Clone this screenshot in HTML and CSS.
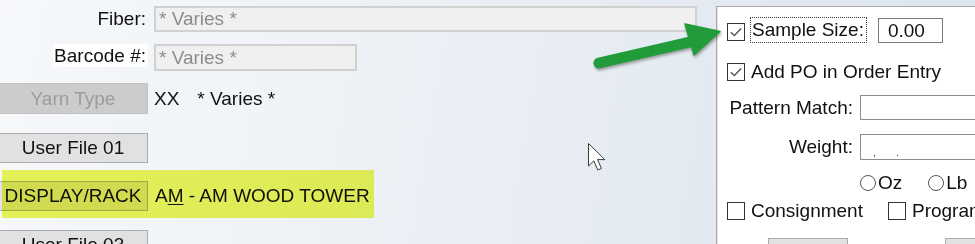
FILE: index.html
```html
<!DOCTYPE html>
<html>
<head>
<meta charset="utf-8">
<link rel="stylesheet" href="styles.css">
</head>
<body>
<div class="screen">
  <div class="left">
    <div class="row r-fiber">
      <span class="lbl"><span class="lbl-txt">Fiber:</span></span>
      <div class="field dis wide">* Varies *</div>
    </div>
    <div class="row r-barcode">
      <span class="lbl"><span class="lbl-txt lbl-white">Barcode #:</span></span>
      <div class="field dis mid">* Varies *</div>
    </div>
    <div class="row r-yarn">
      <div class="btn disabled">Yarn Type</div>
      <span class="val">XX</span>
      <span class="val2">* Varies *</span>
    </div>
    <div class="row r-uf1">
      <div class="btn">User File 01</div>
    </div>
    <div class="row r-disp">
      <div class="btn">DISPLAY/RACK</div>
      <span class="val val-disp">A<u>M</u> - AM WOOD TOWER</span>
    </div>
    <div class="row r-uf3">
      <div class="btn">User File 03</div>
    </div>
  </div>

  <div class="panel">
    <div class="p-row pa">
      <span class="chk checked chk-a"><svg viewBox="0 0 16 16" width="16" height="16"><path d="M2.8 8.2 L6.3 11.6 L13.2 4.4" fill="none" stroke="#555" stroke-width="1.4"/></svg></span>
      <span class="focus">Sample Size:</span>
      <div class="tb num">0.00</div>
    </div>
    <div class="p-row pb">
      <span class="chk checked"><svg viewBox="0 0 16 16" width="16" height="16"><path d="M2.8 8.2 L6.3 11.6 L13.2 4.4" fill="none" stroke="#555" stroke-width="1.4"/></svg></span>
      <span class="chk-lbl">Add PO in Order Entry</span>
    </div>
    <div class="p-row pc">
      <span class="plbl">Pattern Match:</span>
      <div class="tb long"></div>
    </div>
    <div class="p-row pd">
      <span class="plbl">Weight:</span>
      <div class="tb long mask"><span>,</span><span class="mask2">.</span></div>
    </div>
    <div class="p-row pe">
      <span class="radio"></span><span class="radio-lbl">Oz</span>
      <span class="radio radio2"></span><span class="radio-lbl">Lb</span>
    </div>
    <div class="p-row pf">
      <span class="chk"></span>
      <span class="chk-lbl">Consignment</span>
      <span class="chk chk-prog"></span>
      <span class="chk-lbl">Program</span>
    </div>
    <div class="p-row pg">
      <div class="pbtn pbtn1"></div>
      <div class="pbtn pbtn2"></div>
    </div>
  </div>

  <div class="highlight"></div>

  <svg class="arrow" width="975" height="244" viewBox="0 0 975 244">
    <g class="arrow-shadow">
      <line x1="599" y1="63" x2="690" y2="42" stroke="#229c3a" stroke-width="11" stroke-linecap="round"/>
      <polygon points="685,24 720,31.5 694,55" fill="#229c3a" stroke="#229c3a" stroke-width="1.5" stroke-linejoin="round"/>
    </g>
  </svg>

  <svg class="cursor" width="19" height="29" viewBox="0 0 19 29">
    <path d="M0.5 0.5 L0.5 23 L5.8 17.8 L9.8 27 L13.4 25.4 L9.5 16.6 L16.8 16.6 Z" fill="#fff" stroke="#3a3a3a" stroke-width="1" stroke-linejoin="miter"/>
  </svg>
</div>
</body>
</html>
```

FILE: styles.css
```css
html, body {
  margin: 0;
  padding: 0;
}

body {
  width: 975px;
  height: 244px;
  overflow: hidden;
}

.screen {
  position: relative;
  width: 975px;
  height: 244px;
  overflow: hidden;
  display: flex;
  background: linear-gradient(100deg, #f6f8fa 0%, #edf1f6 40%, #e3e9f1 75%, #dbe4ee 100%);
  font-family: "Liberation Sans", Arial, sans-serif;
  font-size: 19px;
  color: #111111;
}

/* ---------- left column ---------- */
.left {
  flex: 0 0 716px;
  display: flex;
  flex-direction: column;
}

.row {
  display: flex;
  align-items: center;
  flex: none;
}

.lbl {
  flex: none;
  width: 148px;
  text-align: right;
  align-self: stretch;
  display: flex;
  justify-content: flex-end;
  align-items: center;
}

.lbl-txt {
  padding-right: 2px;
}

.lbl-white {
  background: #ffffff;
  line-height: 23px;
  padding-left: 1px;
  align-self: flex-start;
}

.field {
  box-sizing: border-box;
  margin-left: 6px;
  height: 26px;
  border: 2px solid #d1d1d1;
  background: #f0f0f0;
  color: #8c8c8c;
  padding-left: 3px;
  line-height: 22px;
}

.wide { width: 543px; }
.mid { width: 203px; height: 27px; line-height: 23px; }

.r-fiber { margin-top: 6px; height: 26px; }
.r-barcode { margin-top: 12px; height: 27px; }
.r-yarn { margin-top: 12px; height: 31px; }
.r-uf1 { margin-top: 19px; height: 30px; }
.r-disp { margin-top: 18px; height: 30px; }
.r-uf3 { margin-top: 19px; height: 30px; }

.btn {
  box-sizing: border-box;
  flex: none;
  width: 150px;
  height: 100%;
  margin-left: -2px;
  border: 1.5px solid #adadad;
  background: #e1e1e1;
  display: flex;
  align-items: center;
  justify-content: center;
  color: #111111;
}

.btn.disabled {
  background: #cccccc;
  border-color: #c2c2c2;
  color: #9c9c9c;
}

.val { margin-left: 6px; }
.val2 { margin-left: 18px; }
.val-disp { margin-left: 7px; }

.val-disp u {
  text-decoration-thickness: 1px;
  text-underline-offset: 2px;
}

/* ---------- right panel ---------- */
.panel {
  flex: 0 0 300px;
  margin-top: 6px;
  border-top: 1px solid #a9a9a9;
  border-left: 1px solid #a9a9a9;
  box-shadow: inset 1px 0 0 #e6e6e6;
  background: #ffffff;
  padding-left: 10px;
  display: flex;
  flex-direction: column;
}

.p-row {
  display: flex;
  align-items: center;
  flex: none;
}

.chk {
  box-sizing: border-box;
  flex: none;
  width: 18px;
  height: 18px;
  border: 1px solid #333333;
  background: #fff;
  display: flex;
  align-items: center;
  justify-content: center;
}

.chk-a { margin-top: 4px; }

.chk-lbl { margin-left: 6px; }

.chk-prog { margin-left: 25px; }

.focus {
  box-sizing: border-box;
  margin-left: 5px;
  height: 26px;
  line-height: 24px;
  border: 1px dotted #3a3a3a;
  padding: 0 2px 0 1px;
}

.tb {
  box-sizing: border-box;
  flex: none;
  border: 1px solid #8c8c8c;
  background: #fff;
}

.num {
  margin-left: 11px;
  width: 65px;
  height: 25px;
  line-height: 23px;
  padding-left: 9px;
  border-color: #7a7a7a;
}

.pa { margin-top: 10px; height: 26px; }
.pb { margin-top: 17px; height: 24px; }
.pc { margin-top: 11px; height: 25px; }
.pd { margin-top: 14px; height: 26px; }
.pe { margin-top: 11px; height: 24px; }
.pf { margin-top: 4px; height: 24px; }
.pg { margin-top: 15px; height: 30px; }

.plbl {
  flex: none;
  width: 126px;
  text-align: right;
}

.long {
  margin-left: 7px;
  width: 200px;
  height: 100%;
}

.mask {
  display: flex;
  align-items: flex-end;
  padding-left: 12px;
  padding-bottom: 1px;
  font-size: 11px;
  line-height: 11px;
  color: #555;
}

.mask2 { margin-left: 20px; }

.radio {
  box-sizing: border-box;
  flex: none;
  width: 16px;
  height: 16px;
  border: 1px solid #555;
  border-radius: 50%;
  background: #fff;
  margin-left: 133px;
}

.radio2 { margin-left: 26px; }

.radio-lbl { margin-left: 2px; }

.pbtn {
  box-sizing: border-box;
  flex: none;
  height: 30px;
  border: 1px solid #adadad;
  background: #e1e1e1;
}

.pbtn1 { margin-left: 41px; width: 80px; }
.pbtn2 { margin-left: 97px; width: 80px; }

/* ---------- overlays ---------- */
.highlight {
  position: absolute;
  left: 2px;
  top: 170px;
  width: 372px;
  height: 48px;
  background: #eef85a;
  mix-blend-mode: multiply;
}

.arrow {
  position: absolute;
  left: 0;
  top: 0;
  pointer-events: none;
}

.arrow-shadow {
  filter: drop-shadow(1px 2px 1.5px rgba(0, 0, 0, 0.35));
}

.cursor {
  position: absolute;
  left: 588px;
  top: 143px;
  pointer-events: none;
}
```
